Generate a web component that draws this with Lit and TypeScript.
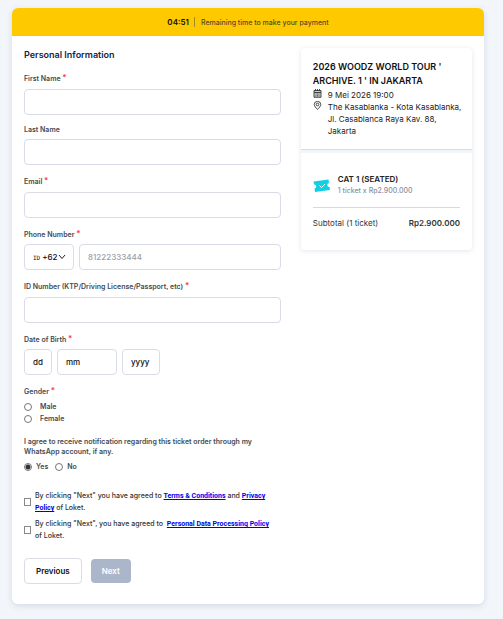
import { LitElement, html, css, nothing } from "lit";
import { customElement, property } from "lit/decorators.js";

const controls = css`
  * { box-sizing: border-box; }
  input, select, button {
    font-family: inherit;
    margin: 0;
  }
  .control {
    height: 26px;
    border: 1px solid #d9dce8;
    border-radius: 4px;
    background: #fff;
    color: #111;
    font-size: 8px;
    font-weight: 500;
    outline: none;
    appearance: none;
    padding: 0 8px;
    min-width: 0;
  }
  .control::placeholder { color: #9a9fa8; opacity: 1; }
  .label {
    display: block;
    font-size: 7px;
    line-height: 10px;
    font-weight: 600;
    color: #444a50;
    padding: 1px 0 4px;
  }
  .label.required { padding: 3px 0 5px; }
  .label.group { padding: 3px 0 4px; }
  .star { color: #f33; font-size: 8px; line-height: 1px; vertical-align: 1px; }
`;

@customElement("text-field")
class TextField extends LitElement {
  @property() label = "";
  @property() type = "text";
  @property({ type: Boolean }) required = false;

  static styles = [controls, css`
    :host { display: block; }
    .wide { display: block; width: 100%; }
  `];

  render() {
    return html`
      <label class="label ${this.required ? "required" : ""}" for="field">${this.label}
        ${this.required ? html`<span class="star">*</span>` : nothing}</label>
      <input id="field" class="control wide" type=${this.type} ?required=${this.required}>
    `;
  }
}

@customElement("order-summary")
class OrderSummary extends LitElement {
  static styles = css`
    * { box-sizing: border-box; }
    :host {
      display: block;
      border-radius: 4px;
      background: #f2f6fa;
      box-shadow: 0 1px 5px rgba(60, 80, 120, 0.14);
    }
    .event {
      background: #fff;
      border-radius: 4px 4px 0 0;
      border-bottom: 1px solid #d5dce6;
      padding: 12px 4px 12px 12px;
    }
    h2 {
      margin: 0;
      font-size: 9px;
      line-height: 14px;
      font-weight: 600;
      color: #111;
    }
    .fact {
      display: grid;
      grid-template-columns: 9px 1fr;
      column-gap: 6px;
      font-size: 8px;
      line-height: 12px;
      font-weight: 400;
      color: #222;
      padding-top: 1px;
    }
    .fact + .fact { padding-top: 0; }
    .fact svg { display: block; width: 9px; height: 9px; }
    .order {
      margin-top: 3px;
      background: #fff;
      border-radius: 0 0 4px 4px;
      padding: 20px 12px;
    }
    .ticket {
      display: flex;
      align-items: center;
      gap: 8px;
      padding-bottom: 10px;
      border-bottom: 1px solid #d5dae2;
    }
    .ticket svg { width: 17px; height: 13px; flex: none; }
    .name { font-size: 8px; line-height: 12px; font-weight: 600; color: #222; }
    .count { font-size: 7px; line-height: 12px; font-weight: 500; color: #8a919c; }
    .total {
      display: flex;
      justify-content: space-between;
      font-size: 8px;
      line-height: 12px;
      color: #333;
      padding: 9px 0 1px;
    }
    .total strong { font-weight: 600; color: #333; }
  `;

  render() {
    return html`
      <section class="event">
        <h2>2026 WOODZ WORLD TOUR '<br>ARCHIVE. 1 ' IN JAKARTA</h2>
        <div class="fact">
          <svg viewBox="0 0 18 18" fill="none" stroke="#333" stroke-width="1.8" aria-hidden="true">
            <path d="M2 3h14v13.5H2z" fill="#ccc" />
            <path d="M2 7h14M5 0v4M9 0v4M13 0v4" />
            <path d="M5 10h2M8 10h2M11 10h2M5 13.5h2M8 13.5h2M11 13.5h2" stroke-width="1.6" />
          </svg>
          <span>9 Mei 2026 19:00</span>
        </div>
        <div class="fact">
          <svg viewBox="0 0 18 18" fill="none" stroke="#333" stroke-width="1.8" aria-hidden="true">
            <path d="M9 17C6 13.500 2.500 10.500 2.500 7a6.500 6.200 0 0 1 13 0c0 3.500-3.500 6.500-6.500 10z" />
            <circle cx="9" cy="7" r="2.600" />
          </svg>
          <span>The Kasablanka - Kota Kasablanka,<br>Jl. Casablanca Raya Kav. 88,<br>Jakarta</span>
        </div>
      </section>
      <section class="order">
        <div class="ticket">
          <svg viewBox="0 0 34 26" aria-hidden="true">
            <path fill="#12cfe6" d="M1 5 31 1l1 7a4 4 0 0 0 1 8l1 6L4 26l-1-7a4 4 0 0 0-1-8z" />
            <path d="m13 13 4 4 7-7" fill="none" stroke="#fff" stroke-width="2" />
          </svg>
          <div>
            <div class="name">CAT 1 (SEATED)</div>
            <div class="count">1 ticket x Rp2.900.000</div>
          </div>
        </div>
        <div class="total"><span>Subtotal (1 ticket)</span><strong>Rp2.900.000</strong></div>
      </section>
    `;
  }
}

@customElement("app-root")
class AppRoot extends LitElement {
  static styles = [controls, css`
    :host {
      display: block;
      box-sizing: border-box;
      min-height: 100vh;
      padding: 8px 19px 15px 12px;
      background: #f2f6fa;
      font-family: Inter, Roboto, sans-serif;
    }
    .card {
      background: #fff;
      border-radius: 6px;
      box-shadow: 0 2px 6px rgba(60, 80, 130, 0.16);
    }
    .timer {
      display: flex;
      align-items: center;
      justify-content: center;
      height: 28px;
      border-radius: 6px 6px 0 0;
      background: #ffc900;
      font-size: 7px;
      font-weight: 500;
      color: #554d22;
    }
    .timer time {
      font-size: 8px;
      font-weight: 600;
      color: #111;
      padding-right: 5px;
      margin-right: 6px;
      border-right: 1px solid #a88a20;
    }
    .content {
      display: grid;
      grid-template-columns: 3fr 2fr;
      gap: 20px;
      align-items: start;
      padding: 12px 12px 20px;
    }
    form { display: flex; flex-direction: column; gap: 9px; min-width: 0; }
    h1 {
      margin: 0;
      font-size: 9px;
      line-height: 14px;
      font-weight: 600;
      color: #10254c;
    }
    fieldset { border: 0; margin: 0; padding: 0; min-width: 0; }
    legend { padding: 0; }
    .row { display: flex; gap: 5px; }
    .code {
      display: flex;
      align-items: center;
      width: 50px;
      flex: none;
      padding-right: 6px;
    }
    .code span { font: 6px "DejaVu Sans Mono", monospace; padding-right: 2px; }
    .code select {
      appearance: none;
      border: 0;
      padding: 0;
      background: none;
      font-size: 8px;
      font-weight: 500;
      color: #111;
      width: 16px;
      flex: none;
      outline: none;
    }
    .code svg { width: 8px; height: 6px; flex: none; }
    .phone { flex: 1; }
    .day { width: 28px; }
    .year { width: 38px; }
    .month { width: 60px; }
    .date::placeholder { color: #111; }
    .option {
      display: flex;
      align-items: center;
      font-size: 7px;
      line-height: 12px;
      font-weight: 600;
      color: #444a50;
    }
    .option input {
      appearance: none;
      width: 8px;
      height: 8px;
      flex: none;
      border: 1px solid #777;
      border-radius: 50%;
      background: #fff;
    }
    .option input:checked { background: radial-gradient(circle, #333 2px, #fff 3px); }
    .stack .option { gap: 8px; }
    .stack { padding-bottom: 3px; }
    .consent {
      padding: 0 0 4px;
      font-weight: 600;
      font-size: 7px;
      line-height: 10px;
      color: #444a50;
    }
    .inline { display: flex; gap: 7px; }
    .inline .option { gap: 4px; }
    .terms { display: grid; gap: 4px; padding: 8px 8px 0 0; }
    .terms .option { gap: 4px; font-weight: 500; color: #333; }
    .terms input { width: 7px; border-color: #888; border-radius: 0; }
    a { color: #00e; font-family: Roboto, sans-serif; font-weight: 700; }
    .actions { display: flex; align-items: center; gap: 9px; padding-top: 7px; }
    .button {
      height: 26px;
      padding: 0 11px;
      border: 1px solid #d9dce8;
      border-radius: 4px;
      background: #fff;
      font-size: 8px;
      font-weight: 600;
      color: #111;
    }
    .next { height: 24px; border: 0; background: #abb6ca; color: #fff; }
  `];

  render() {
    return html`
      <main class="card">
        <div class="timer"><time>04:51</time><span>Remaining time to make your payment</span></div>
        <div class="content">
          <form @submit=${(e: Event) => e.preventDefault()}>
            <h1>Personal Information</h1>
            <text-field label="First Name" required></text-field>
            <text-field label="Last Name"></text-field>
            <text-field label="Email" type="email" required></text-field>
            <div>
              <label class="label group" for="phone">Phone Number <span class="star">*</span></label>
              <div class="row">
                <label class="control code">
                  <span>ID</span>
                  <select aria-label="Country code"><option>+62</option></select>
                  <svg viewBox="0 0 16 12" fill="none" stroke="#222" stroke-width="2" aria-hidden="true"><path d="m2 2 6 7 6-7" /></svg>
                </label>
                <input id="phone" class="control phone" type="tel" placeholder="81222333444">
              </div>
            </div>
            <text-field label="ID Number (KTP/Driving License/Passport, etc)" required></text-field>
            <fieldset>
              <legend class="label group">Date of Birth <span class="star">*</span></legend>
              <div class="row">
                <input class="control date day" placeholder="dd" aria-label="Day">
                <select class="control month" aria-label="Month"><option>mm</option></select>
                <input class="control date year" placeholder="yyyy" aria-label="Year">
              </div>
            </fieldset>
            <fieldset class="stack">
              <legend class="label group">Gender <span class="star">*</span></legend>
              <label class="option"><input type="radio" name="gender">Male</label>
              <label class="option"><input type="radio" name="gender">Female</label>
            </fieldset>
            <fieldset>
              <legend class="consent">I agree to receive notification regarding this ticket order through my WhatsApp account, if any.</legend>
              <div class="inline">
                <label class="option"><input type="radio" name="notify" checked>Yes</label>
                <label class="option"><input type="radio" name="notify">No</label>
              </div>
            </fieldset>
            <div class="terms">
              <label class="option"><input type="checkbox"><span>By clicking "Next" you have agreed to <a href="#terms">Terms &amp; Conditions</a> and <a href="#privacy">Privacy Policy</a> of Loket.</span></label>
              <label class="option"><input type="checkbox"><span>By clicking "Next", you have agreed to&nbsp; <a href="#data">Personal Data Processing Policy</a> of Loket.</span></label>
            </div>
            <div class="actions">
              <button class="button" type="button">Previous</button>
              <button class="button next" type="submit">Next</button>
            </div>
          </form>
          <order-summary></order-summary>
        </div>
      </main>
    `;
  }
}
